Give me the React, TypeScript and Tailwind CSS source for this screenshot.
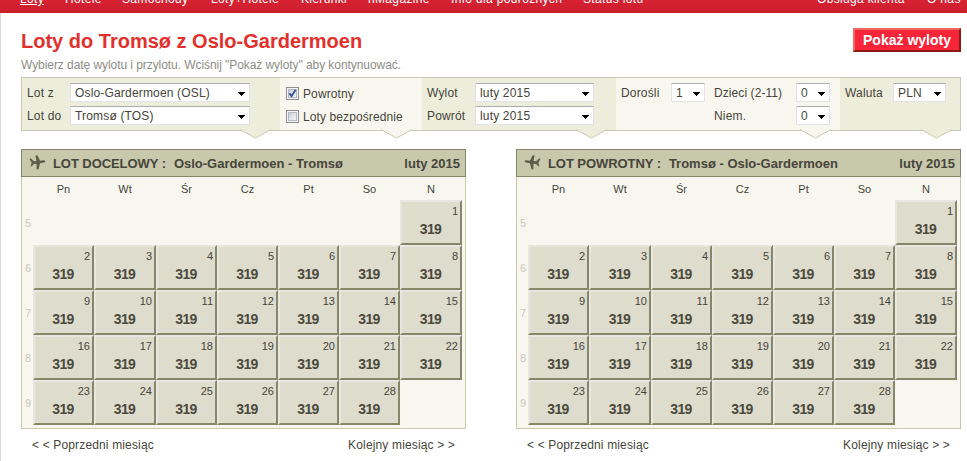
import clsx from "clsx";

const navLeft = [
  { label: "Loty", width: "w-[25px]", active: true },
  { label: "Hotele", width: "w-[37px]" },
  { label: "Samochody", width: "w-[69px]" },
  { label: "Loty+Hotele", width: "w-[70px]" },
  { label: "Kierunki", width: "w-[47px]" },
  { label: "nMagazine", width: "w-[63px]" },
  { label: "Info dla podróżnych", width: "w-[112px]" },
  { label: "Status lotu", width: "w-[63px]" },
];

const weekdays = ["Pn", "Wt", "Śr", "Cz", "Pt", "So", "N"];

const weeks = [
  { week: 5, days: [0, 0, 0, 0, 0, 0, 1] },
  { week: 6, days: [2, 3, 4, 5, 6, 7, 8] },
  { week: 7, days: [9, 10, 11, 12, 13, 14, 15] },
  { week: 8, days: [16, 17, 18, 19, 20, 21, 22] },
  { week: 9, days: [23, 24, 25, 26, 27, 28, 0] },
];

function Select({ value, className }: { value: string; className: string }) {
  return (
    <button
      className={clsx(
        "flex h-[19px] items-center justify-between rounded-[1px] border border-[#e2e3ea] border-t-[#abadb3] bg-white pr-1 pl-1 text-left",
        className
      )}
    >
      <span className="pt-0.5 whitespace-pre">{value}</span>
      <svg width="7" height="4" viewBox="0 0 7 4" shapeRendering="crispEdges" className="mt-0.5">
        <path d="M0 0h7v1H6v1H5v1H4v1H3V3H2V2H1V1H0z" fill="#000" />
      </svg>
    </button>
  );
}

function Checkbox({ label, checked }: { label: string; checked?: boolean }) {
  return (
    <label className="flex h-[13px] items-center">
      <span className="flex h-[13px] w-[13px] items-center justify-center border border-[#8e8f8f] bg-[#f4f4f4]">
        <span className="flex h-[9px] w-[9px] items-center justify-center border border-[#b4bac4] bg-linear-to-br from-[#cbcfd5] to-[#f6f6f6]">
          {checked && (
            <svg width="9" height="9" viewBox="0 0 9 9" className="shrink-0">
              <path d="M1.3 4.3 3.6 7.2 7.6.8" fill="none" stroke="#3d5596" strokeWidth="1.9" />
            </svg>
          )}
        </span>
      </span>
      <span className="ml-1 tracking-[0.1px] whitespace-nowrap">{label}</span>
    </label>
  );
}

function Notch({ fill, className }: { fill: string; className: string }) {
  return (
    <svg width="31" height="10" viewBox="0 0 31 10" className={clsx("absolute -bottom-[9px]", className)}>
      <path d="M0 0h31v.5L15.500 9 0 .5z" fill={fill} />
      <path d="M0 .5 15.500 9 31 .5" fill="none" stroke="#c9caaf" />
    </svg>
  );
}

function Plane({ flip }: { flip?: boolean }) {
  return (
    <svg
      width="17"
      height="15"
      viewBox="0 0 17 15"
      className={clsx("-mt-0.5 shrink-0", flip && "-scale-x-100")}
    >
      <path
        d="M.5 3.800 2 3.500 4.800 6.200 7.500 6 6.400.5 8.200.3 11.100 5.700 14.500 5.300Q16.300 5.400 16.300 6.500 16.200 7.400 14.600 7.600L11 8.200 9.500 14.200 7.700 14.400 7.500 8.800 4.800 8.900 2.800 11.200 1.600 11.200 2.700 7.800z"
        fill="#5c5c49"
      />
    </svg>
  );
}

function Calendar({ title, route, flip }: { title: string; route: string; flip?: boolean }) {
  return (
    <section className="w-[445px]">
      <div className="h-[280px] border border-[#c8c9ad] bg-[#f8f7ef]">
        <header className="-mx-px -mt-px flex h-7 items-center border border-[#85866a] bg-[#c8c8ac] pr-[5px] pl-[7px] text-[13px] font-bold text-[#46453a]">
          <Plane flip={flip} />
          <span className="mt-px ml-[7px] tracking-[-0.07px] whitespace-pre">{title}</span>
          <span className="mt-px ml-2 whitespace-pre">{route}</span>
          <span className="mt-px ml-auto">luty 2015</span>
        </header>
        <div className="grid h-[23px] grid-cols-[11px_61px_62px_61px_61px_61px_61px_62px] items-center pt-0.5 text-center text-[11px]">
          <span />
          {weekdays.map((d) => (
            <span key={d}>{d}</span>
          ))}
        </div>
        {weeks.map((w) => (
          <div
            key={w.week}
            className="grid h-[45px] grid-cols-[11px_61px_62px_61px_61px_61px_61px_62px]"
          >
            <span className="self-center pt-0.5 pl-[3px] text-[11px] text-[#c9c9c1]">{w.week}</span>
            {w.days.map((day, i) =>
              day ? (
                <div
                  key={i}
                  className="flex flex-col border-2 border-t-[#e7e7df] border-r-[#85866a] border-b-[#85866a] border-l-[#e7e7df] bg-[#dedccd]"
                >
                  <span className="mt-[3px] pr-[2px] text-right text-[11px] leading-3">{day}</span>
                  <span className="mt-[4px] pr-px text-center text-[14px] leading-[17px] font-bold tracking-[-0.7px] text-[#4b4a3c]">
                    319
                  </span>
                </div>
              ) : (
                <span key={i} />
              )
            )}
          </div>
        ))}
      </div>
      <footer className="flex h-8 items-center justify-between pr-[11px] pl-[11px] text-[12px] tracking-[0.15px]">
        <a className="whitespace-pre">&lt; &lt; Poprzedni miesiąc</a>
        <a className="whitespace-pre">Kolejny miesiąc &gt; &gt;</a>
      </footer>
    </section>
  );
}

export default function App() {
  return (
    <div className="h-[461px] w-[967px] overflow-hidden bg-white font-['Liberation_Sans',Arial,sans-serif] text-[12px] text-[#46453a]">
      <nav className="flex h-[13px] items-end overflow-hidden bg-linear-to-b from-[#d72233] to-[#cd1d2d] pr-[6px] pb-[6px] pl-5 text-[12px] leading-4 tracking-[0.34px] text-white">
        <div className="flex gap-5">
          {navLeft.map((n) => (
            <a key={n.label} className={clsx("whitespace-nowrap", n.width, n.active && "underline")}>
              {n.label}
            </a>
          ))}
        </div>
        <div className="ml-auto flex gap-5 whitespace-nowrap">
          <a className="w-[90px]">Obsługa klienta</a>
          <a className="w-[34px]">O nas</a>
        </div>
      </nav>

      <main className="h-[448px] border-l border-[#d9d9d9] pr-[6px] pl-5">
        <div className="flex h-16 justify-between">
          <div className="pt-[16px]">
            <h1 className="text-[20px] leading-6 font-bold text-[#e2312d]">
              Loty do Tromsø z Oslo-Gardermoen
            </h1>
            <p className="mt-1 text-[12px] leading-4 tracking-[-0.065px] text-[#8d8d86]">
              Wybierz datę wylotu i przylotu. Wciśnij "Pokaż wyloty" aby kontynuować.
            </p>
          </div>
          <button className="mt-[15px] h-6 w-[108px] border-2 border-t-[#ee6a60] border-r-[#8b1a12] border-b-[#8b1a12] border-l-[#ee6a60] bg-[#f72538] text-[14px] leading-5 font-bold whitespace-nowrap text-white">
            Pokaż wyloty
          </button>
        </div>

        <form className="relative flex h-[54px] border border-[#c9caaf] bg-[#f8f7ef] tracking-[0.17px]">
          <div className="grid w-[258px] grid-cols-[43px_180px] content-start gap-y-1 bg-[#ecedda] pt-[5px] pl-[5px] leading-[19px]">
            <span className="h-[19px] pt-px">Lot z</span>
            <Select value="Oslo-Gardermoen (OSL)" className="w-[180px]" />
            <span className="h-[19px] pt-px">Lot do</span>
            <Select value="Tromsø (TOS)" className="w-[180px]" />
          </div>
          <div className="flex w-[142px] flex-col gap-[10px] pt-[9px] pl-[6px]">
            <Checkbox label="Powrotny" checked />
            <Checkbox label="Loty bezpośrednie" />
          </div>
          <div className="grid w-[194px] grid-cols-[48px_119px] content-start gap-y-1 bg-[#ecedda] pt-[5px] pl-[5px] leading-[19px]">
            <span className="h-[19px] pt-px">Wylot</span>
            <Select value="luty 2015" className="w-[119px]" />
            <span className="h-[19px] pt-px">Powrót</span>
            <Select value="luty 2015" className="w-[119px]" />
          </div>
          <div className="grid w-[224px] grid-cols-[50px_43px_82px_34px] content-start gap-y-1 pt-[5px] pl-[5px] leading-[19px]">
            <span className="h-[19px] pt-px">Dorośli</span>
            <Select value="1" className="w-[34px]" />
            <span className="h-[19px] pt-px tracking-[0.08px]">Dzieci (2-11)</span>
            <Select value="0" className="w-[34px]" />
            <span className="col-start-3 h-[19px] pt-px">Niem.</span>
            <Select value="0" className="w-[34px]" />
          </div>
          <div className="grid flex-1 grid-cols-[48px_53px] content-start bg-[#ecedda] pt-[5px] pl-[5px] leading-[19px]">
            <span className="h-[19px] pt-px">Waluta</span>
            <Select value="PLN" className="w-[53px]" />
          </div>
          <Notch fill="#ecedda" className="left-[218px]" />
          <Notch fill="#f8f7ef" className="left-[359px]" />
          <Notch fill="#ecedda" className="left-[554px]" />
          <Notch fill="#f8f7ef" className="left-[778px]" />
          <Notch fill="#ecedda" className="left-[899px]" />
        </form>

        <div className="mt-[18px] flex justify-between">
          <Calendar title="LOT DOCELOWY :" route="Oslo-Gardermoen - Tromsø" />
          <Calendar title="LOT POWROTNY :" route="Tromsø - Oslo-Gardermoen" flip />
        </div>
      </main>
    </div>
  );
}
